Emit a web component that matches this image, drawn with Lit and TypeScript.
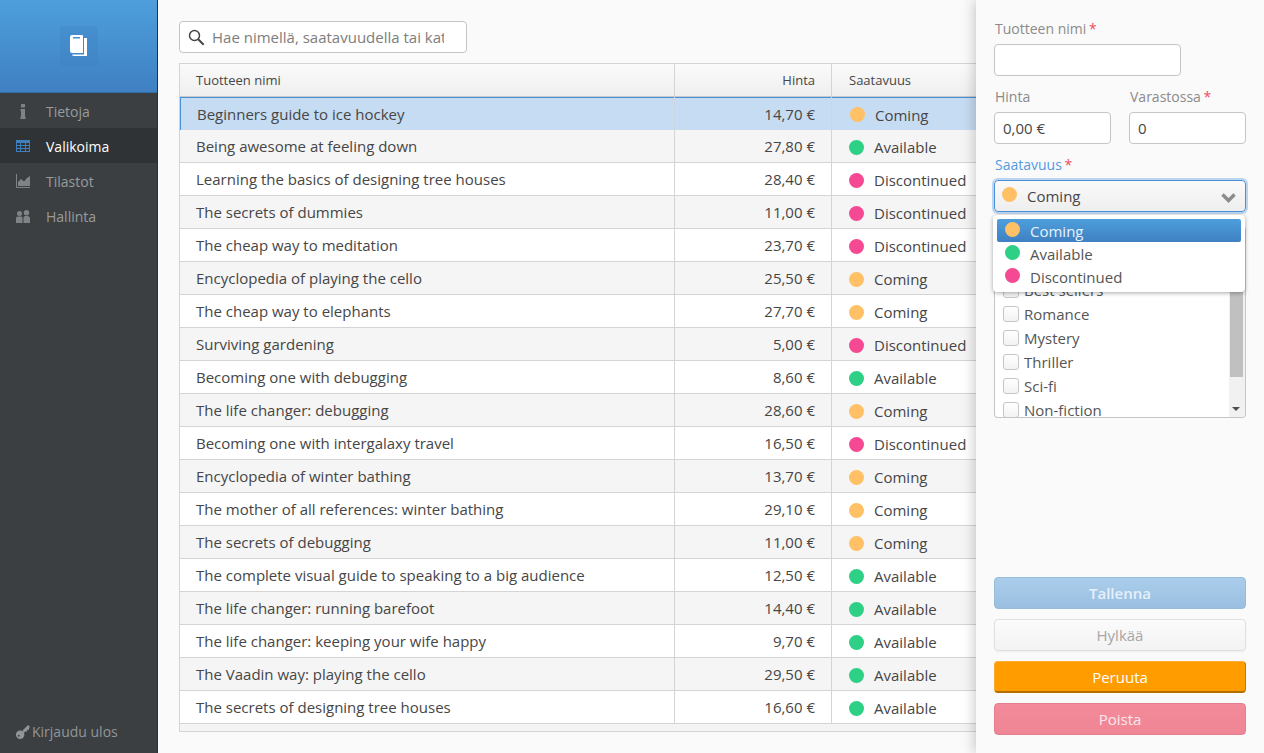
import { LitElement, css, html, svg } from 'lit';
import { customElement } from 'lit/decorators.js';

type Status = 'Coming' | 'Available' | 'Discontinued';

const ROWS: [string, string, Status][] = [
  ['Beginners guide to ice hockey', '14,70 €', 'Coming'],
  ['Being awesome at feeling down', '27,80 €', 'Available'],
  ['Learning the basics of designing tree houses', '28,40 €', 'Discontinued'],
  ['The secrets of dummies', '11,00 €', 'Discontinued'],
  ['The cheap way to meditation', '23,70 €', 'Discontinued'],
  ['Encyclopedia of playing the cello', '25,50 €', 'Coming'],
  ['The cheap way to elephants', '27,70 €', 'Coming'],
  ['Surviving gardening', '5,00 €', 'Discontinued'],
  ['Becoming one with debugging', '8,60 €', 'Available'],
  ['The life changer: debugging', '28,60 €', 'Coming'],
  ['Becoming one with intergalaxy travel', '16,50 €', 'Discontinued'],
  ['Encyclopedia of winter bathing', '13,70 €', 'Coming'],
  ['The mother of all references: winter bathing', '29,10 €', 'Coming'],
  ['The secrets of debugging', '11,00 €', 'Coming'],
  ['The complete visual guide to speaking to a big audience', '12,50 €', 'Available'],
  ['The life changer: running barefoot', '14,40 €', 'Available'],
  ['The life changer: keeping your wife happy', '9,70 €', 'Available'],
  ['The Vaadin way: playing the cello', '29,50 €', 'Available'],
  ['The secrets of designing tree houses', '16,60 €', 'Available'],
];

const STATUSES: Status[] = ['Coming', 'Available', 'Discontinued'];
const CATEGORIES = ['Best sellers', 'Romance', 'Mystery', 'Thriller', 'Sci-fi', 'Non-fiction'];

const ICONS = {
  info: svg`<path d="M6 1h4v3.500H6zM5.500 6h4.500v7.500h.5V16H5.500v-2.500H6V8h-.5z"/>`,
  table: svg`<path fill-rule="evenodd" d="M1 2h14v12H1zM2 5v2h3V5zm4 0v2h4V5zm5 0v2h3V5zM2 8v2h3V8zm4 0v2h4V8zm5 0v2h3V8zM2 11v2h3v-2zm4 0v2h4v-2zm5 0v2h3v-2z"/>`,
  chart: svg`<path d="M1 1h1v13h13v1H1z"/><path d="M3 13V9l3-3 3 2.500L12 5l3-2v10z"/>`,
  users: svg`<path d="M4.500 3a2.500 2.500 0 0 1 0 5 2.500 2.500 0 0 1 0-5zM11.500 2a2.700 2.700 0 0 1 0 5.400 2.700 2.700 0 0 1 0-5.400zM1 15v-4.500C1 9 2 8.500 3 8.500h3c1 0 1.500.5 1.500 2V15zM8.500 15v-5c0-1 .5-2 1.500-2h2.500c1.500 0 2.500 1 2.500 2.500V15z"/>`,
};

@customElement('app-root')
export class AppRoot extends LitElement {
  static styles = css`
:host {
  display: flex;
  position: relative;
  height: 753px;
  overflow: hidden;
  background: #fafafa;
  font-family: "Open Sans", sans-serif;
  font-size: 15px;
  color: #464646;
}
.side {
  flex: none;
  width: 157px;
  border-right: 1px solid #2c3033;
  background: #3b3f42;
  display: flex;
  flex-direction: column;
}
.brand {
  height: 92px;
  border-bottom: 1px solid #2f6ea8;
  background: linear-gradient(#4e9fdc, #3f80c3);
  display: flex;
  align-items: center;
  justify-content: center;
}
.logo {
  width: 38px;
  height: 40px;
  margin-top: -1px;
  border-radius: 4px;
  background: rgba(60, 125, 190, 0.25);
  display: flex;
  align-items: center;
  justify-content: center;
}
.menu-item {
  height: 35px;
  box-sizing: border-box;
  padding-top: 1px;
  display: flex;
  align-items: center;
  color: #999b9d;
  font-size: 14px;
}
.menu-item svg {
  width: 16px;
  height: 16px;
  margin: 0 15px;
  fill: #808386;
  flex: none;
}
.menu-item.on {
  background: #2f3336;
  color: #fff;
}
.menu-item.on svg {
  fill: #3f7fbd;
}
.logout {
  margin-top: auto;
  height: 43px;
  padding-left: 15px;
  display: flex;
  align-items: center;
  gap: 2px;
  color: #929597;
  font-size: 14px;
}
.logout svg {
  width: 15px;
  height: 15px;
  fill: #929597;
}
.main {
  flex: 1;
  min-width: 0;
  padding: 21px 20px 21px 21px;
  display: flex;
  flex-direction: column;
  gap: 10px;
}
.search {
  box-sizing: border-box;
  width: 288px;
  height: 32px;
  border: 1px solid #c5c5c5;
  border-radius: 4px;
  background: #fff;
  display: flex;
  align-items: center;
  padding-left: 8px;
  flex: none;
}
.search svg {
  width: 17px;
  height: 17px;
  flex: none;
}
.search input {
  flex: none;
  width: 232px;
  margin-left: 7px;
  border: 0;
  padding: 0;
  outline: 0;
  background: none;
  font: 15px "Open Sans", sans-serif;
}
.search input::placeholder {
  color: #7d7d7d;
  opacity: 1;
}
.grid {
  flex: 1;
  min-height: 0;
  overflow: hidden;
  border: 1px solid #d4d4d4;
  background: #f4f4f4;
}
.row {
  display: grid;
  grid-template-columns: 494px 157px 1fr;
  height: 33px;
  box-sizing: border-box;
  border-bottom: 1px solid #d4d4d4;
  background: #fff;
}
.row.odd {
  background: #f5f5f5;
}
.row.head {
  height: 33px;
  background: linear-gradient(#fafafa, #efefef);
  border-bottom: 1px solid #c9c9c9;
  font-size: 13px;
}
.row.sel {
  background: #c6dcf2;
  border-bottom: 0;
  box-shadow: inset 0 1px 0 #4a90d9, inset 1px 0 0 #4a90d9;
}
.cell {
  display: flex;
  align-items: center;
  padding: 0 16px;
  border-left: 1px solid #d4d4d4;
  white-space: nowrap;
  min-width: 0;
}
.cell:first-child {
  border-left: 0;
}
.cell.wide {
  padding-left: 17px;
}
.row.sel .cell:first-child {
  padding-left: 17px;
}
.row.sel .cell {
  border-left-color: #cfd6dd;
}
.row.sel .status {
  padding-left: 18px;
}
.price {
  justify-content: flex-end;
}
.status {
  padding-top: 2px;
  padding-left: 17px;
  box-sizing: border-box;
}
.dot {
  flex: none;
  width: 15px;
  height: 15px;
  border-radius: 50%;
  margin-right: 10px;
}
.Coming {
  background: #ffc066;
}
.Available {
  background: #2dd085;
}
.Discontinued {
  background: #f54993;
}
.panel {
  position: absolute;
  top: 0;
  right: 0;
  bottom: 0;
  width: 252px;
  padding: 18px;
  background: #fafafa;
  box-shadow: -2px 0 12px rgba(0, 0, 0, 0.2);
  display: flex;
  flex-direction: column;
}
.label {
  display: block;
  height: 22px;
  margin-bottom: 4px;
  padding-left: 1px;
  line-height: 22px;
  color: #8b8b8b;
  font-size: 14px;
}
.label i {
  font-style: normal;
  margin-left: -1px;
  color: #ee4b5f;
}
.label.focus {
  color: #549bdf;
}
.input {
  display: block;
  box-sizing: border-box;
  width: 100%;
  height: 32px;
  border: 1px solid #c5c5c5;
  border-radius: 4px;
  background: #fff;
  padding: 0 8px;
  outline: 0;
  font: 15px "Open Sans", sans-serif;
  color: #464646;
}
.field {
  margin-bottom: 10px;
}
.name {
  width: 187px;
}
.pair {
  display: grid;
  grid-template-columns: 117px 117px;
  gap: 18px;
}
.combo {
  position: relative;
  height: 32px;
  box-sizing: border-box;
  border: 1px solid #4a90d9;
  border-radius: 4px;
  box-shadow: 0 0 0 2px rgba(74, 144, 217, 0.35);
  background: linear-gradient(#fafafa, #eeeeee);
  display: flex;
  align-items: center;
  padding-left: 7px;
}
.combo svg {
  position: absolute;
  right: 9px;
  top: 12px;
  width: 15px;
  height: 10px;
  fill: none;
  stroke: #8c8c8c;
  stroke-width: 3.500;
}
.combo .dot {
  margin-top: -3px;
  margin-right: 10px;
}
.drop {
  position: absolute;
  left: 17px;
  top: 215px;
  width: 252px;
  height: 77px;
  box-sizing: border-box;
  padding: 4px;
  border-radius: 4px;
  background: #fff;
  box-shadow: 0 1px 4px rgba(0, 0, 0, 0.35);
  z-index: 2;
}
.opt {
  height: 23px;
  box-sizing: border-box;
  display: flex;
  align-items: center;
  padding-left: 8px;
  border-radius: 2px;
  color: #555;
  font-size: 15px;
}
.opt .dot {
  margin-right: 10px;
  margin-top: -3px;
}
.opt.on {
  background: linear-gradient(#4e9fdc, #3f80c3);
  color: #e8f2fb;
}
.list {
  display: flex;
  height: 192px;
  margin-top: 4px;
  box-sizing: border-box;
  border: 1px solid #c5c5c5;
  border-top: 0;
  border-radius: 4px;
  background: #fff;
  overflow: hidden;
  color: #555;
}
.items {
  flex: 1;
  padding: 52px 0 0 8px;
}
.check {
  height: 24px;
  display: flex;
  align-items: center;
  gap: 5px;
}
.box {
  width: 14px;
  height: 14px;
  border: 1px solid #c5c5c5;
  border-radius: 3px;
  background: linear-gradient(#fff, #f2f2f2);
}
.track {
  flex: none;
  width: 16px;
  background: #f1f1f1;
  display: flex;
  flex-direction: column;
}
.thumb {
  height: 151px;
  width: 13px;
  margin-left: 1px;
  background: #c0c0c0;
}
.arrow {
  margin: auto 0 6px 3px;
  width: 0;
  height: 0;
  border: 4px solid transparent;
  border-top-color: #505050;
  border-bottom: 0;
}
.actions {
  margin-top: auto;
  display: flex;
  flex-direction: column;
  gap: 10px;
}
.btn {
  height: 32px;
  box-sizing: border-box;
  border-radius: 4px;
  display: flex;
  align-items: center;
  justify-content: center;
  font-size: 15px;
}
.save {
  background: linear-gradient(#a9cdea, #9bbfe1);
  border: 1px solid #97bcdc;
  color: #e6f0fa;
  font-weight: 600;
}
.discard {
  background: linear-gradient(#fbfbfb, #f3f3f3);
  border: 1px solid #e0e0e0;
  color: #a6a6a6;
  box-shadow: 0 1px 2px rgba(0, 0, 0, 0.05);
}
.cancel {
  background: #ff9c00;
  border: 1px solid #ffab33;
  border-right-color: #c27a05;
  border-bottom: 2px solid #b56f00;
  color: #fff;
}
.delete {
  background: linear-gradient(#f38b9b, #ef8595);
  border: 1px solid #e3808f;
  color: #fde8ec;
}
`;

  menuItem(label: string, icon: keyof typeof ICONS, on = false) {
    return html`<div class="menu-item ${on ? 'on' : ''}">
      <svg viewBox="0 0 16 16">${ICONS[icon]}</svg>${label}
    </div>`;
  }

  row(r: [string, string, Status], i: number) {
    const cls = i === 0 ? 'sel' : i % 2 ? 'odd' : '';
    return html`<div class="row ${cls}">
      <div class="cell">${r[0]}</div>
      <div class="cell price">${r[1]}</div>
      <div class="cell status"><span class="dot ${r[2]}"></span>${r[2]}</div>
    </div>`;
  }

  render() {
    return html`
<div class="side">
  <div class="brand">
    <div class="logo">
      <svg width="17" height="21" viewBox="0 0 17 21" fill="#fff">
        <path fill-rule="evenodd" d="M2 0h10a1 1 0 0 1 1 1v17H2a2 2 0 0 1-2-2V2a2 2 0 0 1 2-2zM3 2v1.500h7V2z"/>
        <path d="M14 3h3v18H3.500A2 2 0 0 1 2 19.500h12z"/>
      </svg>
    </div>
  </div>
  ${this.menuItem('Tietoja', 'info')}
  ${this.menuItem('Valikoima', 'table', true)}
  ${this.menuItem('Tilastot', 'chart')}
  ${this.menuItem('Hallinta', 'users')}
  <div class="logout">
    <svg viewBox="0 0 16 16"><path d="M5.500 7a4.500 4.500 0 1 1-.01 9 4.500 4.500 0 0 1 .01-9zM4 11.500a1 1 0 1 0 0 2 1 1 0 0 0 0-2zM8 7l6-6 2 2-1 1v2h-2v2h-2L9.500 9.500z"/></svg>
    Kirjaudu ulos
  </div>
</div>

<div class="main">
  <div class="search">
    <svg viewBox="0 0 17 17" fill="none" stroke="#444" stroke-width="1.500">
      <circle cx="6.500" cy="6.500" r="5"/><path d="M10.200 10.200l5.500 5.500" stroke-width="2"/>
    </svg>
    <input placeholder="Hae nimellä, saatavuudella tai kategorialla" />
  </div>
  <div class="grid">
    <div class="row head">
      <div class="cell">Tuotteen nimi</div>
      <div class="cell price">Hinta</div>
      <div class="cell wide">Saatavuus</div>
    </div>
    ${ROWS.map((r, i) => this.row(r, i))}
  </div>
</div>

<div class="panel">
  <div class="field name">
    <label class="label">Tuotteen nimi&nbsp;<i>*</i></label>
    <input class="input" />
  </div>
  <div class="field pair">
    <div>
      <label class="label">Hinta</label>
      <input class="input" value="0,00 €" />
    </div>
    <div>
      <label class="label">Varastossa&nbsp;<i>*</i></label>
      <input class="input" value="0" />
    </div>
  </div>
  <div class="field">
    <label class="label focus">Saatavuus&nbsp;<i>*</i></label>
    <div class="combo">
      <span class="dot Coming"></span>Coming
      <svg viewBox="0 0 15 10"><path d="M1.500 1.500L7.500 7.500l6-6"/></svg>
    </div>
  </div>
  <div class="list">
    <div class="items">
      ${CATEGORIES.map(c => html`<div class="check"><span class="box"></span>${c}</div>`)}
    </div>
    <div class="track">
      <div class="thumb"></div>
      <div class="arrow"></div>
    </div>
  </div>
  <div class="actions">
    <div class="btn save">Tallenna</div>
    <div class="btn discard">Hylkää</div>
    <div class="btn cancel">Peruuta</div>
    <div class="btn delete">Poista</div>
  </div>
  <div class="drop">
    ${STATUSES.map((s, i) => html`<div class="opt ${i === 0 ? 'on' : ''}"><span class="dot ${s}"></span>${s}</div>`)}
  </div>
</div>
`;
  }
}
